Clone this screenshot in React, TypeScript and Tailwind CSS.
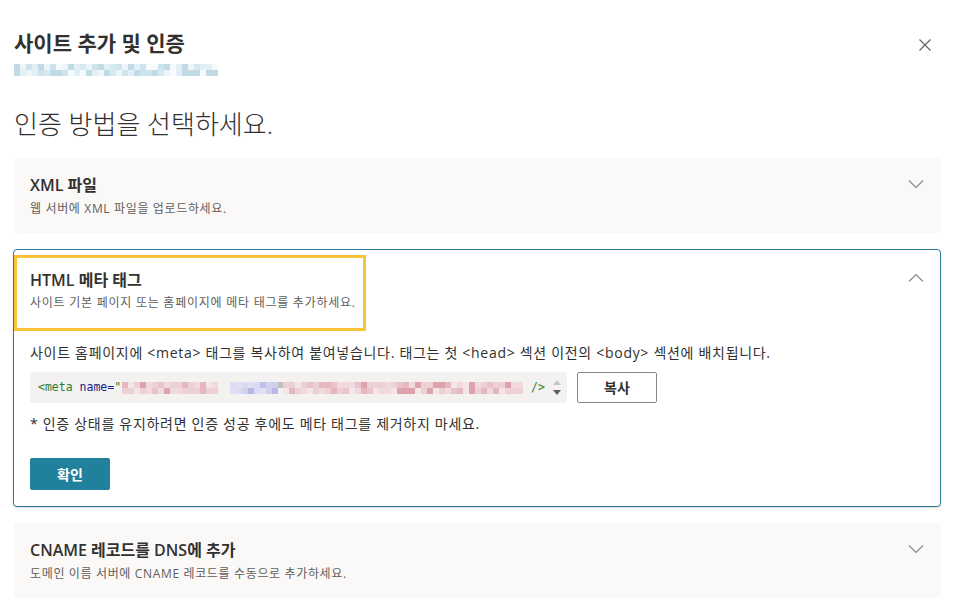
import React from "react";

const font = { fontFamily: '"Open Sans", "Noto Sans CJK KR", sans-serif' };

const pink = ["#f0d5da", "#e6b8c0", "#ecc8ce", "#d98f9c", "#f5e4e7", "#e3a9b3", "#ecc8ce"];
const blue = ["#c9c9ee", "#b3b3ea", "#d5d5f2", "#a9a9e6", "#dcdcf3"];

// pixelated (censored) strip, colors picked from a fixed seed
const Pixels = ({ n, palette, seed, rows = 2 }: { n: number; palette: string[]; seed: number; rows?: number }) => {
  let s = seed;
  const rnd = () => {
    s = (s * 9301 + 49297) % 233280;
    return s / 233280;
  };
  return (
    <div className="flex flex-col">
      {Array.from({ length: rows }).map((_, r) => (
        <div key={r} className="flex">
          {Array.from({ length: n }).map((_, i) => (
            <span
              key={i}
              className="block w-[6px] h-[6px]"
              style={{ backgroundColor: palette[Math.floor(rnd() * palette.length)] }}
            />
          ))}
        </div>
      ))}
    </div>
  );
};

const Chevron = ({ up }: { up?: boolean }) => (
  <svg width="16" height="9" viewBox="0 0 16 9" className="text-[#8a8886]">
    <path d={up ? "M1 8.5L8 1.5L15 8.5" : "M1 0.5L8 7.5L15 0.5"} fill="none" stroke="currentColor" strokeWidth="1.1" />
  </svg>
);

const Card = ({ title, sub }: { title: string; sub: string }) => (
  <div className="bg-[#faf9f8] rounded-[4px] h-[75px] pl-[16px] pr-[16px] flex items-start justify-between">
    <div className="pt-[17px]">
      <div className="text-[16px] font-semibold text-[#323130] leading-[21px]">{title}</div>
      <div className="text-[12px] tracking-[0.65px] text-[#605e5c] leading-[16px] mt-[5px]">{sub}</div>
    </div>
    <div className="pt-[22px] pr-[1px]">
      <Chevron />
    </div>
  </div>
);

const App = () => {
  return (
    <div className="w-[957px] h-[604px] bg-white overflow-hidden pl-[14px] pr-[16px]" style={font}>
      <div className="flex justify-between items-start pt-[30px]">
        <h1 className="text-[21px] font-bold text-[#323130] leading-[26px]">사이트 추가 및 인증</h1>
        <svg width="12" height="12" viewBox="0 0 12 12" className="mt-[9px] mr-[10px] text-[#605e5c]">
          <path d="M0.5 0.5L11.5 11.5M11.5 0.5L0.5 11.5" stroke="currentColor" strokeWidth="1.1" />
        </svg>
      </div>
      <div className="mt-[8px] opacity-70">
        <Pixels n={34} seed={7} palette={["#b9d8e6", "#d7e9f1", "#a6cbdc", "#e6f1f6", "#c6e0ea", "#f2f8fa"]} />
      </div>
      <h2 className="text-[26px] font-light text-[#323130] leading-[34px] mt-[31px]">인증 방법을 선택하세요.</h2>

      <div className="mt-[17px] flex flex-col gap-[16px]">
        <Card title="XML 파일" sub="웹 서버에 XML 파일을 업로드하세요." />

        <div className="border border-[#2b7a98] rounded-[4px] bg-white -ml-[1px] h-[258px] shadow-[0_1px_2px_rgba(0,0,0,0.15)]">
          <div className="flex justify-between items-start pr-[16px]">
            <div className="mt-[5px] border-[3px] border-[#f8c53a] w-[352px] h-[76px] pl-[13px] pt-[12px]">
              <div className="text-[16px] font-semibold text-[#323130] leading-[21px]">HTML 메타 태그</div>
              <div className="text-[12px] tracking-[0.75px] text-[#605e5c] leading-[16px] mt-[4px] whitespace-nowrap">
                사이트 기본 페이지 또는 홈페이지에 메타 태그를 추가하세요.
              </div>
            </div>
            <div className="pt-[23px]">
              <Chevron up />
            </div>
          </div>

          <div className="pl-[16px] pt-[12px]">
            <p className="text-[14px] tracking-[0.7px] text-[#323130] leading-[19px] whitespace-nowrap">
              사이트 홈페이지에 &lt;meta&gt; 태그를 복사하여 붙여넣습니다. 태그는 첫 &lt;head&gt; 섹션 이전의 &lt;body&gt; 섹션에 배치됩니다.
            </p>
            <div className="flex items-center mt-[10px] gap-[10px]">
              <div className="w-[537px] h-[31px] bg-[#f3f2f1] rounded-[3px] flex items-center pl-[8px] pr-[4px]">
                <span className="text-[11.5px] text-[#2e7d32] whitespace-pre" style={{ fontFamily: '"DejaVu Sans Mono", monospace' }}>
                  &lt;meta <span className="text-[#1a1a8c]">name=</span>"
                </span>
                <div className="ml-[1px] flex items-center opacity-80">
                  <Pixels n={16} seed={13} palette={pink} />
                  <div className="w-[12px]" />
                  <Pixels n={8} seed={5} palette={blue} />
                  <span className="block w-[5px] h-[6px] bg-[#b3b3b3] self-start" />
                  <Pixels n={40} seed={29} palette={pink} />
                </div>
                <span className="ml-[8px] text-[11.5px] text-[#2e7d32]" style={{ fontFamily: '"DejaVu Sans Mono", monospace' }}>
                  /&gt;
                </span>
                <div className="ml-auto flex flex-col items-center gap-[5px] pr-[2px]">
                  <svg width="8" height="5" viewBox="0 0 8 5"><path d="M4 0L8 5H0Z" fill="#c8c6c4" /></svg>
                  <svg width="8" height="5" viewBox="0 0 8 5"><path d="M0 0H8L4 5Z" fill="#605e5c" /></svg>
                </div>
              </div>
              <button className="w-[80px] h-[31px] border border-[#8a8886] rounded-[2px] bg-white text-[14px] font-semibold text-[#323130]">
                복사
              </button>
            </div>
            <p className="text-[14px] tracking-[0.7px] text-[#323130] leading-[19px] mt-[11px]">
              * 인증 상태를 유지하려면 인증 성공 후에도 메타 태그를 제거하지 마세요.
            </p>
            <button className="mt-[25px] w-[80px] h-[32px] bg-[#21809b] rounded-[2px] text-white text-[14px] font-semibold">
              확인
            </button>
          </div>
        </div>

        <Card title="CNAME 레코드를 DNS에 추가" sub="도메인 이름 서버에 CNAME 레코드를 수동으로 추가하세요." />
      </div>
    </div>
  );
};

export default App;
